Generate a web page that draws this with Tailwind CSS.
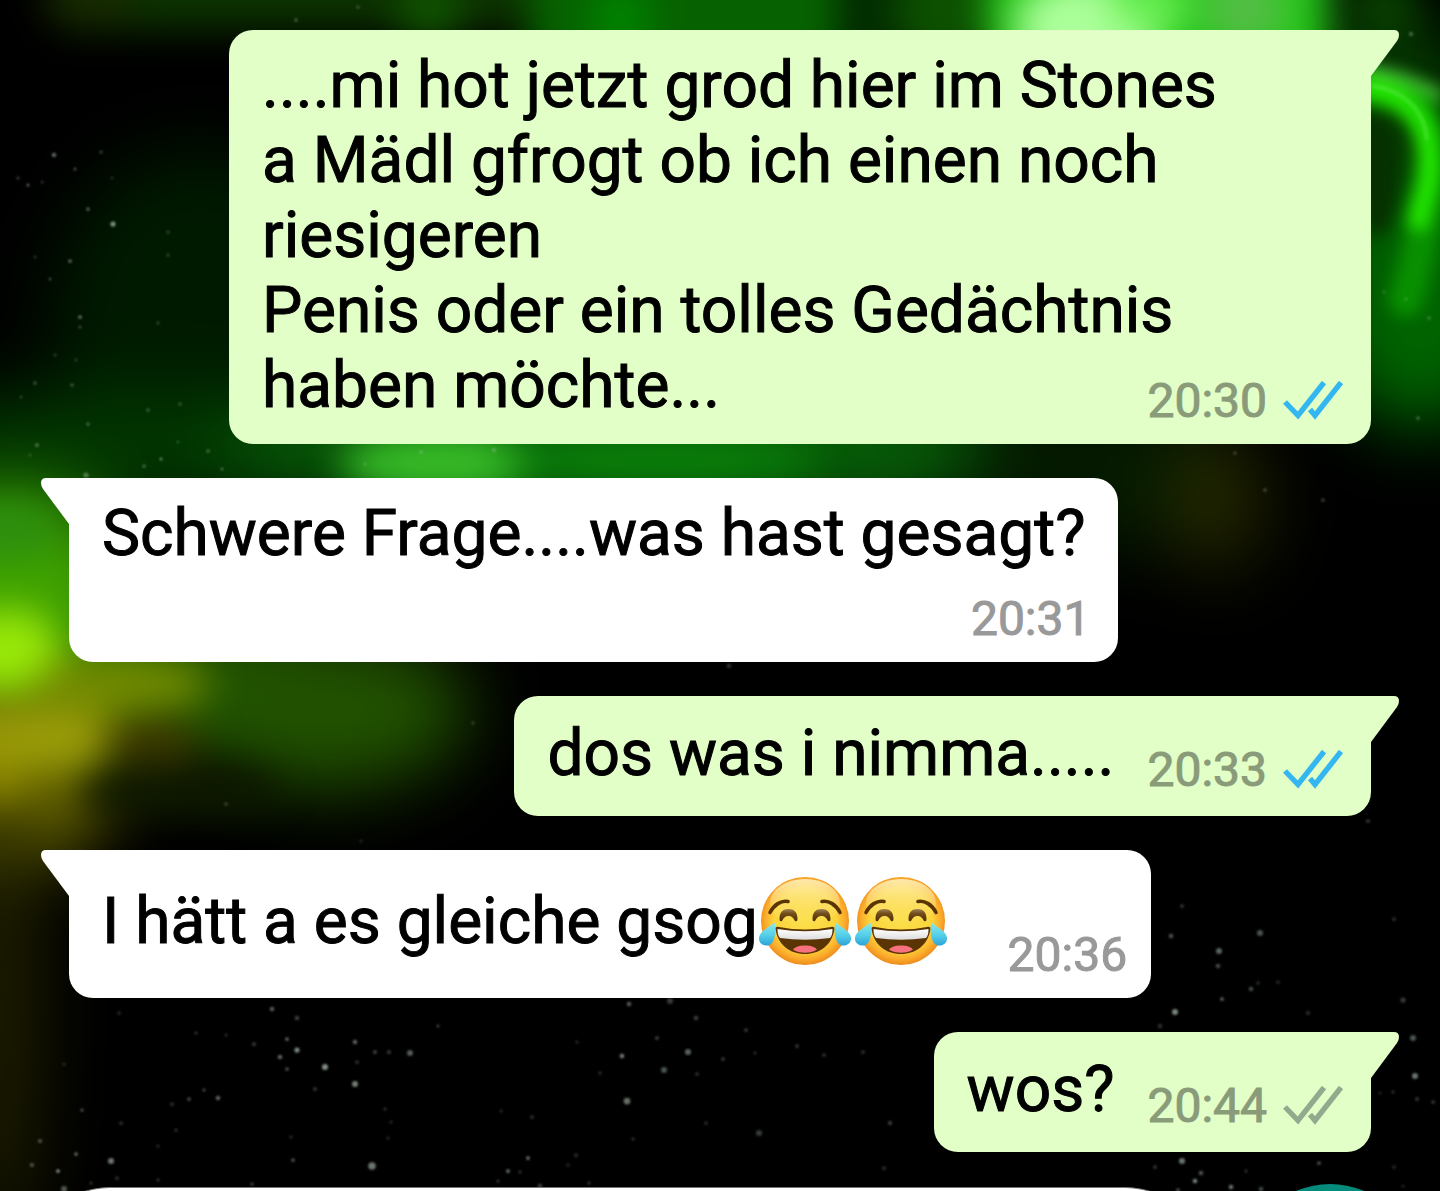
<!DOCTYPE html>
<html lang="de">
<head>
  <meta charset="UTF-8" />
  <meta name="viewport" content="width=device-width, initial-scale=1" />
  <title>Chat</title>
  <script src="https://cdn.jsdelivr.net/npm/@tailwindcss/browser@4"></script>
</head>
<body class="relative h-screen overflow-hidden bg-black font-[Roboto,sans-serif] text-black">

  <!-- shared shapes -->
  <svg class="absolute w-0 h-0" aria-hidden="true">
    <defs>
      <radialGradient id="face" cx="50%" cy="48%" r="52%">
        <stop offset="0" stop-color="#fbe04a" />
        <stop offset="0.68" stop-color="#fcd43c" />
        <stop offset="0.86" stop-color="#fbae2c" />
        <stop offset="1" stop-color="#ee8a1c" />
      </radialGradient>
      <linearGradient id="shine" x1="0" y1="0" x2="0" y2="1">
        <stop offset="0" stop-color="#fff3c4" stop-opacity="0.85" />
        <stop offset="1" stop-color="#fbe36a" stop-opacity="0" />
      </linearGradient>
      <linearGradient id="eye" x1="0" y1="0" x2="0" y2="1">
        <stop offset="0" stop-color="#a08058" />
        <stop offset="0.35" stop-color="#75501c" />
        <stop offset="1" stop-color="#4d2d02" />
      </linearGradient>
      <linearGradient id="tear" x1="0" y1="0" x2="0" y2="1">
        <stop offset="0" stop-color="#8be9ee" />
        <stop offset="0.55" stop-color="#55cfe8" />
        <stop offset="1" stop-color="#2ba4d8" />
      </linearGradient>
      <linearGradient id="teeth" x1="0" y1="0" x2="0" y2="1">
        <stop offset="0" stop-color="#ffffff" />
        <stop offset="1" stop-color="#dcdcdc" />
      </linearGradient>
    </defs>
    <symbol id="joy" viewBox="0 0 96 96">
      <circle cx="47" cy="48" r="44" fill="url(#face)" />
      <ellipse cx="47" cy="30" rx="35" ry="24" fill="url(#shine)" />
      <g transform="translate(-1 0)">
        <path d="M13 39.500C17 32 24 27 31 28.500M83 39.500C79 32 72 27 65 28.500" fill="none" stroke="#5a3503" stroke-width="3.600" stroke-linecap="round" />
        <path d="M22.500 46C22.500 39 26 36 31.500 36S40.500 39 40.500 46Q40.500 49 38 48C36 44 34 43 31.500 43S27 44 25 48Q22.500 49 22.500 46Z" fill="url(#eye)" />
        <path d="M55.500 46C55.500 39 59 36 64.500 36S73.500 39 73.500 46Q73.500 49 71 48C69 44 67 43 64.500 43S60 44 58 48Q55.500 49 55.500 46Z" fill="url(#eye)" />
        <path d="M18.500 56C18 54 20 53.500 22 54Q48 59 74 54C76 53.500 78 54 77.500 56C75 72 63 81 48 81S21 72 18.500 56Z" fill="#5a3503" />
        <path d="M20.500 56Q48 60.500 75.500 56C75.500 60 75 63 73 65Q48 68.500 23 65C21 63 20.500 60 20.500 56Z" fill="url(#teeth)" />
        <path d="M36 76.500C39 73 44 72.500 48 72.500S57 73 60 76.500C57 79 52 79.700 48 79.700S39 79 36 76.500Z" fill="#f8717f" />
        <path d="M17.500 49.500C19 55 18.500 61 17 66C15.500 71 12 73 8.500 72.500C4 72 1.500 68.500 2 64.500C3 58 11 55 17.500 49.500Z" fill="url(#tear)" />
        <path d="M78.500 49.500C77 55 77.500 61 79 66C80.500 71 84 73 87.500 72.500C92 72 94.500 68.500 94 64.500C93 58 85 55 78.500 49.500Z" fill="url(#tear)" />
      </g>
    </symbol>
    <symbol id="ticks" viewBox="0 0 60 40">
      <path d="M2 21L15 34.500L41 1.500M27 28.500L32 34.500L58 1.500" fill="none" stroke="currentColor" stroke-width="5.400" stroke-linejoin="miter" />
    </symbol>
    <symbol id="tail" viewBox="0 0 30 48">
      <path d="M0 0H23Q28 0 28 5Q28 8 26 11L0 46Z" fill="currentColor" />
    </symbol>
  </svg>

  <!-- wallpaper -->
  <svg class="absolute inset-0 w-full h-full" viewBox="0 0 1440 1191" preserveAspectRatio="xMidYMid slice" aria-hidden="true">
    <defs>
      <filter id="b40" x="-100%" y="-100%" width="300%" height="300%" color-interpolation-filters="sRGB"><feGaussianBlur stdDeviation="36" /></filter>
      <filter id="b20" x="-100%" y="-100%" width="300%" height="300%" color-interpolation-filters="sRGB"><feGaussianBlur stdDeviation="18" /></filter>
      <filter id="b8" x="-100%" y="-100%" width="300%" height="300%" color-interpolation-filters="sRGB"><feGaussianBlur stdDeviation="8" /></filter>
      <filter id="b1" x="-100%" y="-100%" width="300%" height="300%" color-interpolation-filters="sRGB"><feGaussianBlur stdDeviation="1" /></filter>
    </defs>
    <rect width="1440" height="1191" fill="#000" />
    <g filter="url(#b40)">
      <ellipse cx="200" cy="320" rx="150" ry="170" fill="#001a00" />
      <ellipse cx="120" cy="450" rx="280" ry="60" fill="#013600" />
      <ellipse cx="10" cy="600" rx="130" ry="110" fill="#3ea200" />
      <ellipse cx="230" cy="690" rx="180" ry="70" fill="#2f6c00" />
      <ellipse cx="320" cy="710" rx="150" ry="80" fill="#215200" />
      <ellipse cx="0" cy="770" rx="110" ry="100" fill="#7c7a00" />
      <ellipse cx="0" cy="980" rx="34" ry="280" fill="#242400" />
      <ellipse cx="640" cy="450" rx="420" ry="70" fill="#076008" />
      <ellipse cx="1420" cy="290" rx="100" ry="140" fill="#006400" />
      <ellipse cx="1400" cy="100" rx="80" ry="80" fill="#053c00" />
      <ellipse cx="1110" cy="470" rx="140" ry="80" fill="#041a00" />
      <ellipse cx="1215" cy="500" rx="50" ry="70" fill="#242800" />
    </g>
    <g filter="url(#b20)">
      <rect x="60" y="-40" width="470" height="70" fill="#0c3200" />
      <ellipse cx="90" cy="0" rx="50" ry="24" fill="#182a00" />
      <ellipse cx="430" cy="12" rx="34" ry="30" fill="#105600" />
      <rect x="530" y="-60" width="310" height="130" fill="#066200" />
      <ellipse cx="620" cy="20" rx="30" ry="40" fill="#008200" />
      <ellipse cx="875" cy="10" rx="30" ry="60" fill="#022e00" />
      <ellipse cx="940" cy="10" rx="44" ry="60" fill="#0c5000" />
      <rect x="985" y="-60" width="345" height="130" fill="#22c616" />
      <ellipse cx="1090" cy="26" rx="76" ry="52" fill="#acff9a" />
      <ellipse cx="1150" cy="4" rx="40" ry="28" fill="#66ee50" />
      <ellipse cx="1245" cy="10" rx="44" ry="40" fill="#52be44" />
      <ellipse cx="1385" cy="10" rx="34" ry="44" fill="#083e00" />
      <ellipse cx="440" cy="463" rx="100" ry="32" fill="#38bc28" />
      <ellipse cx="660" cy="460" rx="160" ry="20" fill="#0a840a" />
      <ellipse cx="10" cy="530" rx="44" ry="26" fill="#2c8f10" />
      <ellipse cx="20" cy="608" rx="44" ry="12" fill="#4aa800" />
      <ellipse cx="6" cy="650" rx="54" ry="40" fill="#98e808" />
      <ellipse cx="120" cy="684" rx="90" ry="26" fill="#748a00" />
      <ellipse cx="36" cy="738" rx="100" ry="30" fill="#9a9c08" />
      <ellipse cx="150" cy="742" rx="50" ry="22" fill="#3e3a00" />
      <ellipse cx="180" cy="790" rx="100" ry="28" fill="#0e1800" />
      <ellipse cx="0" cy="778" rx="34" ry="24" fill="#8b8700" />
    </g>
    <g filter="url(#b8)" fill="none" stroke-linecap="round">
      <path d="M1372 90C1412 94 1434 120 1434 150S1424 240 1406 300" stroke="#089000" stroke-width="34" />
      <ellipse cx="1378" cy="176" rx="20" ry="60" fill="#063000" />
      <path d="M1366 88C1404 92 1424 116 1428 150S1424 190 1418 220" stroke="#22e800" stroke-width="22" />
      <path d="M1366 70C1392 74 1420 84 1440 96" stroke="#4ed03c" stroke-width="10" />
    </g>
    <path d="M1372 86C1400 90 1424 106 1427 140" fill="none" stroke="#6cf05a" stroke-width="5" opacity="0.3" filter="url(#b1)" />
    <g id="stars" filter="url(#b1)"></g>
  </svg>

  <main class="relative flex flex-col gap-[34px] px-[69px] pt-[30px] text-[64px] leading-[75px] [-webkit-text-stroke:1px_currentColor]">

    <article class="relative self-end w-full max-w-[1142px] rounded-3xl rounded-tr-none bg-[#e1ffc7] pl-[33px] pr-7 pt-[18px] pb-[21px]">
      <svg class="absolute top-0 left-full w-[30px] h-12 text-[#e1ffc7]"><use href="#tail" /></svg>
      <p class="max-w-[990px]">....mi hot jetzt grod hier im Stones a Mädl gfrogt ob ich einen noch riesigeren<br />Penis oder ein tolles Gedächtnis haben möchte...</p>
      <div class="absolute right-7 bottom-[15px] flex items-center gap-4 text-5xl leading-[56px] text-[#8a9b7a]">
        <time>20:30</time>
        <svg class="w-[60px] h-10 text-[#34b7f1]" role="img" aria-label="Gelesen"><use href="#ticks" /></svg>
      </div>
    </article>

    <article class="relative self-start flex flex-col rounded-3xl rounded-tl-none bg-white pl-[33px] pr-7 pt-[18px] pb-[15px]">
      <svg class="absolute top-0 right-full w-[30px] h-12 -scale-x-100 text-white"><use href="#tail" /></svg>
      <p class="mb-5 pr-[5px]">Schwere Frage....was hast gesagt?</p>
      <time class="self-end text-5xl leading-[56px] text-[#999]">20:31</time>
    </article>

    <article class="relative self-end flex items-end gap-[33px] rounded-3xl rounded-tr-none bg-[#e1ffc7] pl-[33px] pr-7 pt-5 pb-[18px]">
      <svg class="absolute top-0 left-full w-[30px] h-12 text-[#e1ffc7]"><use href="#tail" /></svg>
      <p class="mb-[7px]">dos was i nimma.....</p>
      <div class="flex items-center gap-4 text-5xl leading-[56px] text-[#8a9b7a]">
        <time>20:33</time>
        <svg class="w-[60px] h-10 text-[#34b7f1]" role="img" aria-label="Gelesen"><use href="#ticks" /></svg>
      </div>
    </article>

    <article class="relative self-start flex items-end gap-[58px] rounded-3xl rounded-tl-none bg-white pl-[33px] pr-6 pt-[23px] pb-[15px]">
      <svg class="absolute top-0 right-full w-[30px] h-12 -scale-x-100 text-white"><use href="#tail" /></svg>
      <p class="flex items-center mb-[14px]">
        I hätt a es gleiche gsog
        <svg class="size-24" role="img" aria-label="Freudentränen"><use href="#joy" /></svg>
        <svg class="size-24" role="img" aria-label="Freudentränen"><use href="#joy" /></svg>
      </p>
      <time class="text-5xl leading-[56px] text-[#999]">20:36</time>
    </article>

    <article class="relative self-end flex items-end gap-[33px] rounded-3xl rounded-tr-none bg-[#e1ffc7] pl-[33px] pr-7 pt-5 pb-[18px]">
      <svg class="absolute top-0 left-full w-[30px] h-12 text-[#e1ffc7]"><use href="#tail" /></svg>
      <p class="mb-[7px]">wos?</p>
      <div class="flex items-center gap-4 text-5xl leading-[56px] text-[#8a9b7a]">
        <time>20:44</time>
        <svg class="w-[60px] h-10 text-[#92a98e]" role="img" aria-label="Zugestellt"><use href="#ticks" /></svg>
      </div>
    </article>
  </main>

  <!-- composer, runs off the bottom of the window -->
  <form class="relative mt-8 flex gap-[33px] px-6">
    <input type="text" aria-label="Nachricht" class="mt-[3px] h-[172px] min-w-0 grow rounded-full border-t border-[#777] bg-white px-20 text-[64px]" />
    <button type="button" aria-label="Sprachnachricht" class="size-[172px] shrink-0 rounded-full bg-[#058a7c]"></button>
  </form>

  <script>
    // x, y, radius, opacity
    const stars = [
      [54,155,3,.6],[75,169,2,.5],[28,185,2,.6],[18,178,2,.4],[42,182,2,.3],[101,152,2.5,.3],[88,209,2.5,.5],[113,224,3.5,.8],
      [112,178,2,.25],[70,261,2.5,.55],[50,279,2,.4],[80,317,2.5,.6],[80,327,2,.4],[35,257,2,.3],[168,232,2.5,.25],[168,255,2.5,.25],
      [158,323,2,.35],[55,355,2,.3],[76,360,2,.3],[35,383,2.5,.35],[72,385,2.5,.35],[21,397,2,.3],[148,410,2.5,.35],[88,424,2.5,.4],
      [37,445,2.5,.5],[30,455,2,.3],[180,404,2.5,.3],[208,451,2.5,.4],[161,459,2,.7],[144,466,2.5,.4],[222,469,2,.5],[86,475,3.5,.5],
      [178,442,2,.3],[365,464,2,.4],[421,452,2.5,.4],[494,450,2.5,.5],[296,20,2.5,.4],[358,7,2.5,.3],[226,804,2.5,.3],[473,723,2.5,.25],[361,841,2,.25],
      [1411,34,3,.4],[1406,299,2,.35],[1384,292,2,.3],[1429,318,3,.25],[1360,348,2.5,.3],[1347,353,2.5,.25],[1360,396,2,.3],[1418,418,2.5,.4],
      [1235,453,2.5,.3],[1323,500,2.5,.35],[1265,490,2.5,.35],[729,666,3,.3],
      [1182,906,2.5,.35],[1171,936,3,.5],[1260,933,4,.5],[1219,951,4,.6],[1218,966,3,.45],[1251,989,3,.45],[1258,983,2,.35],[1222,999,2.5,.6],
      [1175,1012,4,.8],[1160,1026,3,.3],[1308,1013,3,.25],[1394,919,2.5,.3],[1403,1000,3.5,.35],[1413,1038,4,.5],[1368,821,2.5,.35],[1278,982,2.5,.25],
      [272,1009,3,.55],[297,1018,3,.4],[297,1050,3.5,.8],[287,1039,2.5,.6],[280,1057,3,.6],[325,1067,4,.85],[287,1069,2.5,.45],[355,1042,3,.6],
      [355,1084,4,.75],[410,1053,4,.55],[375,1052,2.5,.45],[389,1052,2.5,.4],[357,1062,2.5,.3],[254,1044,2.5,.4],[226,1035,2,.3],[196,1033,2,.35],
      [218,1098,3,.6],[204,1090,2,.5],[189,1099,2.5,.45],[172,1104,2.5,.3],[119,1013,2.5,.25],[64,1064,2.5,.2],[82,1110,2.5,.4],[121,1123,2.5,.3],
      [40,1141,3,.4],[32,1165,3,.4],[58,1171,2.5,.85],[76,1154,2.5,.6],[111,1161,4,.7],[64,1189,4,.5],[176,1130,2,.4],[158,1146,2,.3],
      [293,1160,2.5,.5],[291,1137,2,.3],[372,1166,5,.7],[438,1026,2,.45],[385,1109,2,.35],[391,1122,2,.3],[388,1138,2,.3],[315,1089,2.5,.35],
      [252,1184,2,.5],[158,1180,2,.35],[117,1178,2.5,.3],[91,1183,2,.35],
      [629,1004,3,.55],[670,1001,4,.35],[696,1018,3,.4],[657,1038,2.5,.4],[622,1056,3,.75],[688,1052,4,.6],[664,1070,4,.5],[627,1101,4.5,.65],
      [746,1030,2.5,.35],[723,1059,2.5,.35],[755,1053,2,.3],[797,1046,2.5,.35],[824,1055,2.5,.3],[863,1052,2.5,.3],[759,1133,4,.35],[577,1042,2,.3],
      [600,1073,2.5,.25],[532,1117,2.5,.3],[501,1111,2,.3],[528,1158,2.5,.7],[508,1171,2.5,.7],[520,1172,2,.35],[576,1155,2.5,.3],[568,1165,2,.3],
      [633,1139,2,.35],[706,1123,2.5,.25],[890,1123,3,.35],[884,1168,2.5,.3],[589,1183,2,.4],[540,1186,3,.4],[498,1181,2,.35],[697,1074,2.5,.3],
      [1182,1161,4,.7],[1155,1167,2.5,.35],[1201,1173,3,.5],[1195,1181,3,.8],[1231,1187,3,.7],[1178,1190,2.5,.5],[1246,1171,2,.35],[1319,1163,2.5,.5],
      [1261,1189,3,.45],[1415,1076,4,.7],[1417,1099,2.5,.35],[1433,1102,2.5,.35],[1393,1092,2,.35],[1380,1093,2,.25],[1394,1167,2.5,.25],[1403,1186,2,.25]
    ];
    const layer = document.getElementById('stars');
    stars.forEach(([x, y, r, o]) => {
      const c = document.createElementNS('http://www.w3.org/2000/svg', 'circle');
      c.setAttribute('cx', x);
      c.setAttribute('cy', y);
      c.setAttribute('r', r * 0.75);
      c.setAttribute('fill', '#b4c8b8');
      c.setAttribute('opacity', o * 0.85);
      layer.appendChild(c);
    });
  </script>
</body>
</html>
